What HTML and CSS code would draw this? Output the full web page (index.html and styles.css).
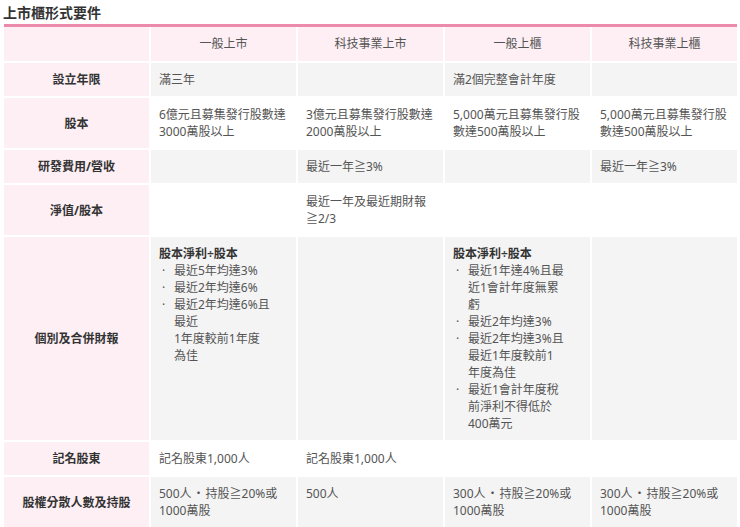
FILE: index.html
```html
<!DOCTYPE html>
<html lang="zh-Hant">
<head>
<meta charset="utf-8">
<title>上市櫃形式要件</title>
<link rel="stylesheet" href="styles.css">
</head>
<body>
<div class="page">
  <h2 class="title">上市櫃形式要件</h2>
  <table class="req">
    <thead>
      <tr>
        <th class="corner"></th>
        <th>一般上市</th>
        <th>科技事業上市</th>
        <th>一般上櫃</th>
        <th>科技事業上櫃</th>
      </tr>
    </thead>
    <tbody>
      <tr class="alt">
        <th>設立年限</th>
        <td>滿三年</td>
        <td></td>
        <td>滿2個完整會計年度</td>
        <td></td>
      </tr>
      <tr>
        <th>股本</th>
        <td>6億元且募集發行股數達<br>3000萬股以上</td>
        <td>3億元且募集發行股數達<br>2000萬股以上</td>
        <td>5,000萬元且募集發行股<br>數達500萬股以上</td>
        <td>5,000萬元且募集發行股<br>數達500萬股以上</td>
      </tr>
      <tr class="alt">
        <th>研發費用/營收</th>
        <td></td>
        <td>最近一年≧3%</td>
        <td></td>
        <td>最近一年≧3%</td>
      </tr>
      <tr>
        <th>淨值/股本</th>
        <td></td>
        <td>最近一年及最近期財報<br>≧2/3</td>
        <td></td>
        <td></td>
      </tr>
      <tr class="alt">
        <th>個別及合併財報</th>
        <td>
          <div class="sub">股本淨利÷股本</div>
          <ul class="list">
            <li><span class="dot">·</span><span>最近5年均達3%</span></li>
            <li><span class="dot">·</span><span>最近2年均達6%</span></li>
            <li><span class="dot">·</span><span>最近2年均達6%且<br>最近<br>1年度較前1年度<br>為佳</span></li>
          </ul>
        </td>
        <td></td>
        <td>
          <div class="sub">股本淨利÷股本</div>
          <ul class="list">
            <li><span class="dot">·</span><span>最近1年達4%且最<br>近1會計年度無累<br>虧</span></li>
            <li><span class="dot">·</span><span>最近2年均達3%</span></li>
            <li><span class="dot">·</span><span>最近2年均達3%且<br>最近1年度較前1<br>年度為佳</span></li>
            <li><span class="dot">·</span><span>最近1會計年度稅<br>前淨利不得低於<br>400萬元</span></li>
          </ul>
        </td>
        <td></td>
      </tr>
      <tr>
        <th>記名股東</th>
        <td>記名股東1,000人</td>
        <td>記名股東1,000人</td>
        <td></td>
        <td></td>
      </tr>
      <tr class="alt">
        <th>股權分散人數及持股</th>
        <td>500人<span class="sep">・</span>持股≧20%或<br>1000萬股</td>
        <td>500人</td>
        <td>300人<span class="sep">・</span>持股≧20%或<br>1000萬股</td>
        <td>300人<span class="sep">・</span>持股≧20%或<br>1000萬股</td>
      </tr>
    </tbody>
  </table>
</div>
</body>
</html>
```
FILE: styles.css
```css
* { box-sizing: border-box; }
html, body {
  margin: 0;
  padding: 0;
  background: #fff;
}
body {
  font-family: "Noto Sans", "Noto Sans CJK TC", sans-serif;
  color: #555;
}
.page {
  padding: 0 3px 0 4px;
}
.title {
  margin: 0 0 0 -1px;
  padding-top: 2px;
  height: 24px;
  font-size: 14px;
  line-height: 22px;
  font-weight: 700;
  color: #333;
}
.req {
  width: 733px;
  table-layout: fixed;
  border-collapse: separate;
  border-spacing: 0;
  border-top: 3px solid #ec8aab;
  font-size: 12px;
  line-height: 17px;
}
.req th, .req td {
  padding: 8px 8px;
  border-left: 2px solid #fff;
  border-top: 2px solid #fff;
  white-space: nowrap;
  text-align: left;
  vertical-align: top;
}
.req thead th {
  border-top: 0;
  background: #fdeff4;
  color: #555;
  font-weight: 400;
  text-align: center;
  vertical-align: middle;
  width: 147px;
  padding: 8px 8px 9px;
}
.req thead th.corner { width: 145px; }
.req th:first-child, .req td:first-child { border-left: 0; }
.req tbody th {
  background: #fdeff4;
  color: #333;
  font-weight: 700;
  text-align: center;
  vertical-align: middle;
}
.req tbody tr.alt td { background: #f4f4f4; }
.sep {
  padding: 0 1px;
}
.sub {
  font-weight: 700;
  color: #333;
}
.list {
  margin: 0;
  padding: 0;
  list-style: none;
}
.list li {
  display: flex;
}
.dot {
  flex: none;
  width: 15px;
  padding-left: 3px;
}
```
